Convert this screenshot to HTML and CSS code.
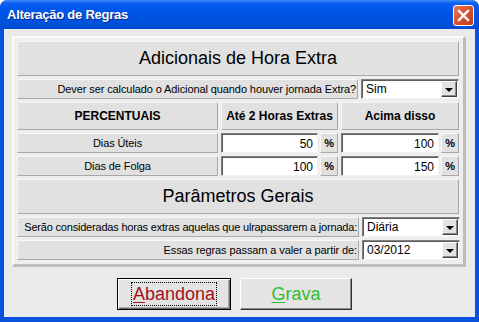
FILE: index.html
```html
<!DOCTYPE html>
<html lang="pt">
<head>
<meta charset="utf-8">
<title>Alteração de Regras</title>
<link rel="stylesheet" href="styles.css">
</head>
<body>
<div class="window">
  <div class="titlebar">
    <span class="title">Alteração de Regras</span>
    <span class="close"><svg width="13" height="13" viewBox="0 0 13 13"><path d="M2 2 L11 11 M11 2 L2 11" stroke="#fff" stroke-width="2.4" stroke-linecap="square"/></svg></span>
  </div>
  <div class="client">
    <div class="panel">
      <div class="row big"><div class="cell head">Adicionais de Hora Extra</div></div>
      <div class="row">
        <div class="cell label wide">Dever ser calculado o Adicional quando houver jornada Extra?</div>
        <div class="combo"><span>Sim</span><span class="drop"></span></div>
      </div>
      <div class="row colh">
        <div class="cell colhead c1">PERCENTUAIS</div>
        <div class="cell colhead c2">Até 2 Horas Extras</div>
        <div class="cell colhead c3">Acima disso</div>
      </div>
      <div class="row">
        <div class="cell c1 lab">Dias Úteis</div>
        <div class="pair c2"><div class="input">50</div><div class="cell pct">%</div></div>
        <div class="pair c3"><div class="input">100</div><div class="cell pct">%</div></div>
      </div>
      <div class="row">
        <div class="cell c1 lab">Dias de Folga</div>
        <div class="pair c2"><div class="input">100</div><div class="cell pct">%</div></div>
        <div class="pair c3"><div class="input">150</div><div class="cell pct">%</div></div>
      </div>
      <div class="row big"><div class="cell head">Parâmetros Gerais</div></div>
      <div class="row">
        <div class="cell label wide2 tight">Serão consideradas horas extras aquelas que ulrapassarem a jornada:</div>
        <div class="combo"><span>Diária</span><span class="drop"></span></div>
      </div>
      <div class="row">
        <div class="cell label wide2">Essas regras passam a valer a partir de:</div>
        <div class="combo"><span>03/2012</span><span class="drop"></span></div>
      </div>
    </div>
    <div class="buttons">
      <button class="btn abandona"><span class="focus"><u>A</u>bandona</span></button>
      <button class="btn grava"><u>G</u>rava</button>
    </div>
  </div>
</div>
</body>
</html>
```
FILE: styles.css
```css
html, body {
  margin: 0;
  padding: 0;
}
body {
  width: 479px;
  height: 322px;
  overflow: hidden;
  background: #ffffff;
  font-family: "Liberation Sans", Arial, sans-serif;
}
.window {
  width: 479px;
  height: 322px;
  box-sizing: border-box;
  background: #0852DE;
  border-radius: 8px 8px 0 0;
  display: flex;
  flex-direction: column;
  padding: 0 4px 5px 4px;
}
.titlebar {
  height: 29px;
  margin: 0 -4px;
  flex: none;
  display: flex;
  align-items: flex-start;
  justify-content: space-between;
  padding: 0 5px 0 7px;
  border-radius: 7px 7px 0 0;
  background: linear-gradient(to bottom, #3E8EF8 0px, #0E62EE 3px, #0058EE 7px, #0055E6 14px, #0052DE 22px, #004BD2 29px);
}
.title {
  color: #ffffff;
  font-weight: bold;
  font-size: 13px;
  letter-spacing: -0.25px;
  line-height: 29px;
  text-shadow: 1px 1px 0 #0A2A8C;
}
.close {
  margin-top: 5px;
  width: 21px;
  height: 21px;
  box-sizing: border-box;
  border: 1px solid #ffffff;
  border-radius: 3px;
  background: linear-gradient(135deg, #E8785A 0%, #D9532F 45%, #C23A1A 100%);
  display: flex;
  align-items: center;
  justify-content: center;
}
.client {
  flex: 1;
  background: #EAEAEA;
  display: flex;
  flex-direction: column;
}
.panel {
  margin: 7px 0 0 8px;
  width: 454px;
  box-sizing: border-box;
  border-style: solid;
  border-width: 2px 3px 3px 2px;
  border-color: #FBFBFB #BDBDBD #BDBDBD #FBFBFB;
  padding: 3px 4px 4px 3px;
  background: #EEEEEE;
  display: flex;
  flex-direction: column;
  gap: 3px;
}
.row {
  display: flex;
  gap: 3px;
  height: 20px;
}
.row.big { height: 35px; }
.row.colh { height: 28px; }
.c1 { width: 201px; flex: none; }
.c2 { width: 117px; flex: none; }
.c3 { width: 118px; flex: none; }
.wide { width: 341px; flex: none; }
.wide2 { width: 342px; flex: none; }
.cell {
  box-sizing: border-box;
  background: #E1E1E1;
  border: 1px solid;
  border-color: #F7F7F7 #A8A8A8 #A8A8A8 #F7F7F7;
  display: flex;
  align-items: center;
  justify-content: center;
  font-size: 11px;
  letter-spacing: -0.1px;
  color: #000000;
  white-space: nowrap;
}
.head {
  flex: 1;
  font-size: 18px;
  letter-spacing: 0;
}
.label {
  justify-content: flex-end;
  padding-right: 1px;
}
.tight {
  letter-spacing: -0.2px;
}
.colhead {
  font-weight: bold;
  font-size: 12px;
  letter-spacing: 0;
}
.pair {
  display: flex;
  gap: 2px;
}
.input {
  flex: 1;
  box-sizing: border-box;
  background: #ffffff;
  border: 1px solid;
  border-color: #808080 #F2F2F2 #F2F2F2 #808080;
  box-shadow: inset 1px 1px 0 #5A5A5A;
  font-size: 12px;
  text-align: right;
  padding: 3px 4px 0 0;
  color: #000000;
}
.pct {
  width: 18px;
  flex: none;
  font-weight: bold;
  font-size: 11px;
}
.combo {
  flex: none;
  width: 98px;
  box-sizing: border-box;
  background: #ffffff;
  border: 1px solid;
  border-color: #808080 #F2F2F2 #F2F2F2 #808080;
  box-shadow: inset 1px 1px 0 #5A5A5A;
  display: flex;
  align-items: center;
  padding: 0 1px 0 4px;
  font-size: 12px;
  color: #000000;
}
.drop {
  margin-left: auto;
  width: 16px;
  height: 16px;
  box-sizing: border-box;
  background: #E3E3E3;
  border: 1px solid;
  border-color: #FFFFFF #404040 #404040 #FFFFFF;
  box-shadow: inset -1px -1px 0 #8A8A8A;
  display: flex;
  align-items: center;
  justify-content: center;
}
.drop::after {
  content: "";
  width: 0;
  height: 0;
  border-left: 4px solid transparent;
  border-right: 4px solid transparent;
  border-top: 4px solid #000000;
  margin-top: 1px;
}
.buttons {
  display: flex;
  gap: 9px;
  margin-top: 11px;
  padding-left: 113px;
}
.btn {
  height: 32px;
  padding: 0;
  margin: 0;
  font-family: "Liberation Sans", Arial, sans-serif;
  font-size: 18px;
  background: #E4E4E4;
  display: flex;
  align-items: center;
  justify-content: center;
}
.btn u { text-decoration-thickness: 1px; text-underline-offset: 2px; }
.abandona {
  width: 114px;
  border: 1px solid #000000;
  box-shadow: inset 1px 1px 0 #FFFFFF, inset -1px -1px 0 #6E6E6E, inset -2px -2px 0 #A8A8A8;
  color: #A3101C;
}
.focus {
  width: 86px;
  height: 24px;
  box-sizing: border-box;
  border: 1px dotted #000000;
  display: flex;
  align-items: center;
  justify-content: center;
}
.grava {
  width: 112px;
  border: 1px solid;
  border-color: #FFFFFF #303030 #303030 #FFFFFF;
  box-shadow: inset -1px -1px 0 #8A8A8A;
  color: #2DBE2D;
}
```
